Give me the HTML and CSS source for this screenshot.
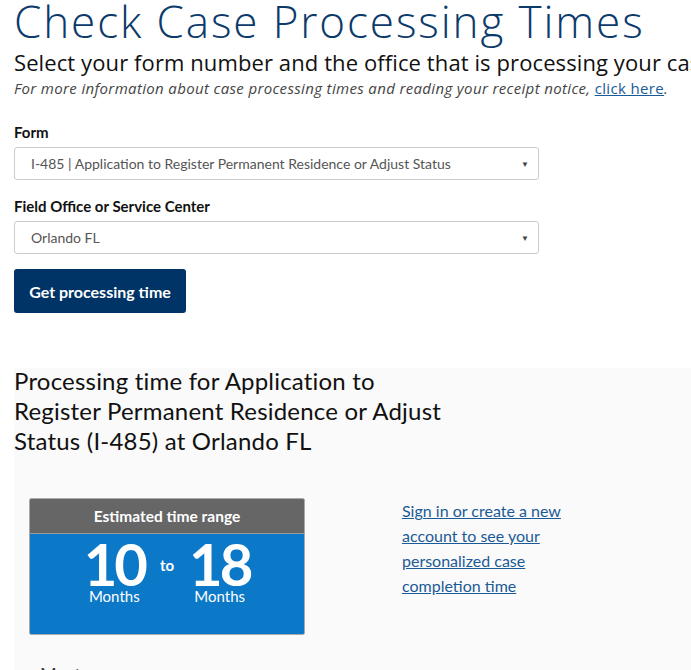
FILE: index.html
```html
<!DOCTYPE html>
<html lang="en">
<head>
    <meta charset="UTF-8">
    <title>Check Case Processing Times</title>
    <link rel="stylesheet" href="styles.css">
</head>
<body>
    <div class="page">
        <h1 class="title">Check Case Processing Times</h1>
        <h2 class="subtitle">Select your form number and the office that is processing your case</h2>
        <p class="note">For more information about case processing times and reading your receipt notice, <a href="#">click here</a>.</p>

        <form class="lookup">
            <label class="field-label" for="form">Form</label>
            <div class="select" id="form">
                <span>I-485 | Application to Register Permanent Residence or Adjust Status</span>
                <span class="caret">&#9660;</span>
            </div>
            <label class="field-label" for="office">Field Office or Service Center</label>
            <div class="select" id="office">
                <span>Orlando FL</span>
                <span class="caret">&#9660;</span>
            </div>
            <button type="button" class="btn">Get processing time</button>
        </form>

        <section class="result">
            <h3 class="result-title">Processing time for Application to Register Permanent Residence or Adjust Status (I-485) at Orlando FL</h3>
            <div class="result-body">
                <div class="range-card">
                    <div class="range-head">Estimated time range</div>
                    <div class="range-values">
                        <div class="range-num">
                            <span class="num">10</span>
                            <span class="unit">Months</span>
                        </div>
                        <span class="to">to</span>
                        <div class="range-num">
                            <span class="num">18</span>
                            <span class="unit">Months</span>
                        </div>
                    </div>
                </div>
                <a class="signin" href="#">Sign in or create a new account to see your personalized case completion time</a>
            </div>
            <p class="more">Most cases</p>
        </section>
    </div>
</body>
</html>
```

FILE: styles.css
```css
html, body {
    margin: 0;
    background: white;
    overflow: hidden;
}
body {
    font-family: Lato, "Open Sans", Arial, sans-serif;
    color: #111;
}
.page {
    padding-left: 14px;
    white-space: nowrap;
}
.title {
    margin: -4px 0 0;
    font-family: "Open Sans", Lato, sans-serif;
    font-size: 44px;
    font-weight: 300;
    line-height: 50px;
    letter-spacing: 1.9px;
    color: #0b3a6b;
}
.subtitle {
    margin: 3px 0 0;
    font-family: "Open Sans", Lato, sans-serif;
    font-size: 22px;
    font-weight: 400;
    line-height: 26px;
    letter-spacing: 0.1px;
    color: #111;
}
.note {
    margin: 3px 0 0;
    font-family: "Open Sans", Lato, sans-serif;
    font-size: 15px;
    font-style: italic;
    letter-spacing: 0.35px;
    color: #444;
    line-height: 20px;
}
.note a {
    color: #1a5a96;
    font-style: normal;
}
.lookup {
    display: flex;
    flex-direction: column;
    align-items: flex-start;
    padding-top: 24px;
}
.field-label {
    font-size: 15px;
    font-weight: 700;
    line-height: 20px;
    margin-bottom: 5px;
}
.select {
    box-sizing: border-box;
    width: 525px;
    height: 33px;
    border: 1px solid #ccc;
    border-radius: 3px;
    display: flex;
    align-items: center;
    justify-content: space-between;
    padding: 0 9px 0 16px;
    font-size: 14px;
    color: #555;
    margin-bottom: 16px;
}
.caret {
    font-size: 8px;
    color: #444;
}
.btn {
    margin-top: -1px;
    width: 172px;
    height: 44px;
    border: none;
    border-radius: 3px;
    background: #003366;
    color: white;
    font-family: inherit;
    font-size: 16px;
    font-weight: 700;
}
.result {
    margin-top: 55px;
    background: #fafafa;
    padding-top: 1px;
    height: 400px;
}
.result-title {
    margin: -3px 0 0;
    width: 445px;
    white-space: normal;
    font-size: 24px;
    font-weight: 400;
    line-height: 30px;
    letter-spacing: 0.2px;
}
.result-body {
    display: flex;
    align-items: flex-start;
    padding: 42px 0 0 15px;
}
.range-card {
    width: 276px;
    box-sizing: border-box;
    border: 1px solid #aaa;
    border-radius: 2px;
    overflow: hidden;
}
.range-head {
    background: #666;
    color: white;
    text-align: center;
    font-size: 15.5px;
    font-weight: 700;
    line-height: 34px;
    border-bottom: 1px solid #999;
}
.range-values {
    background: #0b78c8;
    color: white;
    height: 100px;
    display: flex;
    justify-content: center;
    align-items: flex-start;
    gap: 15px;
    padding-top: 6px;
    box-sizing: border-box;
}
.range-num {
    display: flex;
    flex-direction: column;
    align-items: center;
}
.num {
    font-size: 58px;
    font-weight: 700;
    line-height: 48px;
    letter-spacing: -3px;
}
.unit {
    font-size: 15px;
    line-height: 16px;
}
.to {
    font-size: 15px;
    font-weight: 700;
    margin-top: 16px;
}
.signin {
    margin: 0 0 0 97px;
    width: 180px;
    white-space: normal;
    font-size: 16px;
    line-height: 25px;
    color: #1a5a96;
}
.more {
    margin: 28px 0 0 26px;
    font-size: 18px;
    color: #333;
}
```
